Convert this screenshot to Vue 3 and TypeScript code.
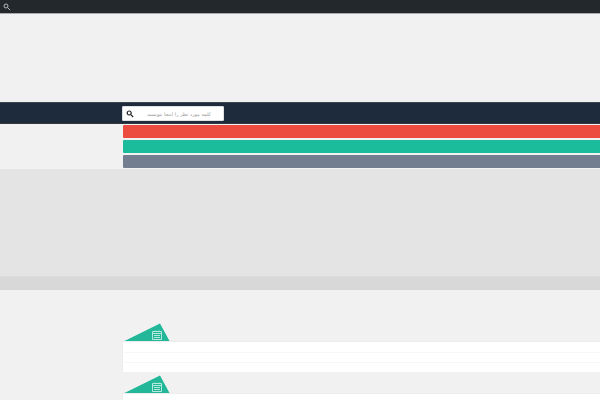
<script setup lang="ts">
import { ref } from 'vue'

const query = ref<string>('')
const links: string[] = ['red', 'green', 'slate']
const panels: number[] = [1, 2]
</script>

<template>
  <div class="page" dir="ltr">
    <div class="admin-bar">
      <button class="icon-button" type="button" aria-label="جستجو">
        <svg class="admin-icon" viewBox="0 0 8 8">
          <circle cx="3" cy="3" r="2" />
          <path d="M4.6 4.6 7.2 7.2" />
        </svg>
      </button>
    </div>
    <header class="banner"></header>
    <nav class="nav">
      <form class="search" role="search" @submit.prevent>
        <button class="icon-button" type="submit" aria-label="جستجو">
          <svg class="search-icon" viewBox="0 0 8 8">
            <circle cx="3.2" cy="3" r="2" />
            <path d="M4.8 4.6 7.2 7" />
          </svg>
        </button>
        <input v-model="query" class="field" type="text" dir="rtl" aria-label="کلمه مورد نظر را اینجا بنویسید" placeholder="کلمه مورد نظر را اینجا بنویسید" />
      </form>
    </nav>
    <div class="links">
      <div v-for="color in links" :key="color" class="link" :class="color"></div>
    </div>
    <section class="hero"></section>
    <div class="strip"></div>
    <main class="content">
      <section v-for="panel in panels" :key="panel" class="panel">
        <svg class="tab" viewBox="0 0 48 18">
          <path class="tab-shape" d="M1.5 18 37 0.5 46.5 18Z" />
          <g class="calendar">
            <path d="M29.5 8.5H38.5V16.5H29.5Z" />
            <path d="M29.5 10.5H38.5M31 12.5H37M31 14.5H37" />
            <path d="M32 7.5V9M36 7.5V9" />
          </g>
        </svg>
        <div class="box">
          <div class="row"></div>
          <div class="row"></div>
          <div class="row"></div>
        </div>
      </section>
    </main>
  </div>
</template>

<style>
body {
  margin: 0;
  background: #f1f1f1;
}
</style>

<style scoped>
.page {
  --gutter: 122px;
  height: 100vh;
  overflow: hidden;
  background: #f1f1f1;
  font-family: "DejaVu Sans", sans-serif;
}

.admin-bar {
  display: flex;
  align-items: center;
  height: 13px;
  padding-left: 3px;
  background: #23282c;
  border-bottom: 1px solid #a9abac;
}

.icon-button {
  display: flex;
  padding: 0;
  border: 0;
  background: none;
}

.admin-icon,
.search-icon {
  display: block;
  width: 8px;
  height: 8px;
  fill: none;
  stroke: #b5babd;
  stroke-width: 1;
}

.search-icon {
  stroke: #222;
  stroke-width: 1.2;
}

.banner {
  height: 88px;
}

.nav {
  box-sizing: border-box;
  height: 22px;
  padding: 3px 0 0 var(--gutter);
  background: #1e2b3c;
  border-top: 1px solid #3a4550;
  border-bottom: 1px solid #34373f;
}

.search {
  display: flex;
  align-items: center;
  box-sizing: border-box;
  width: 102px;
  height: 15px;
  padding: 0 12px 0 3px;
  background: #fff;
  border: 1px solid #dfe2e5;
  border-radius: 1px;
}

.field {
  flex: 1;
  min-width: 0;
  height: 12px;
  padding: 0;
  border: 0;
  outline: 0;
  background: none;
  font-family: "DejaVu Sans", sans-serif;
  font-size: 5px;
  line-height: 12px;
  color: #555;
}

.field::placeholder {
  color: #999;
  opacity: 1;
}

.links {
  display: grid;
  gap: 2px;
  padding: 1px 0 1px calc(var(--gutter) + 1px);
}

.link {
  height: 13px;
  border-radius: 1px 0 0 1px;
}

.red {
  background: #ec4c40;
}

.green {
  background: #1abc9c;
}

.slate {
  background: #737f90;
}

.hero {
  height: 107px;
  background: #e4e4e4;
}

.strip {
  box-sizing: border-box;
  height: 14px;
  background: #d8d8d8;
  border-top: 1px solid #dcdcdc;
}

.content {
  display: grid;
  gap: 3px;
  padding: 33px 0 0 var(--gutter);
}

.tab {
  display: block;
  width: 48px;
  height: 18px;
  margin-left: 1px;
}

.tab-shape {
  fill: #21b798;
}

.calendar {
  fill: none;
  stroke: #b5e9dd;
  stroke-width: 1;
}

.box {
  background: #fff;
  border: 1px solid #ececec;
  border-right: 0;
  border-bottom: 0;
}

.row {
  box-sizing: border-box;
  height: 10px;
}

.row + .row {
  border-top: 1px solid #f7f7f7;
}
</style>
